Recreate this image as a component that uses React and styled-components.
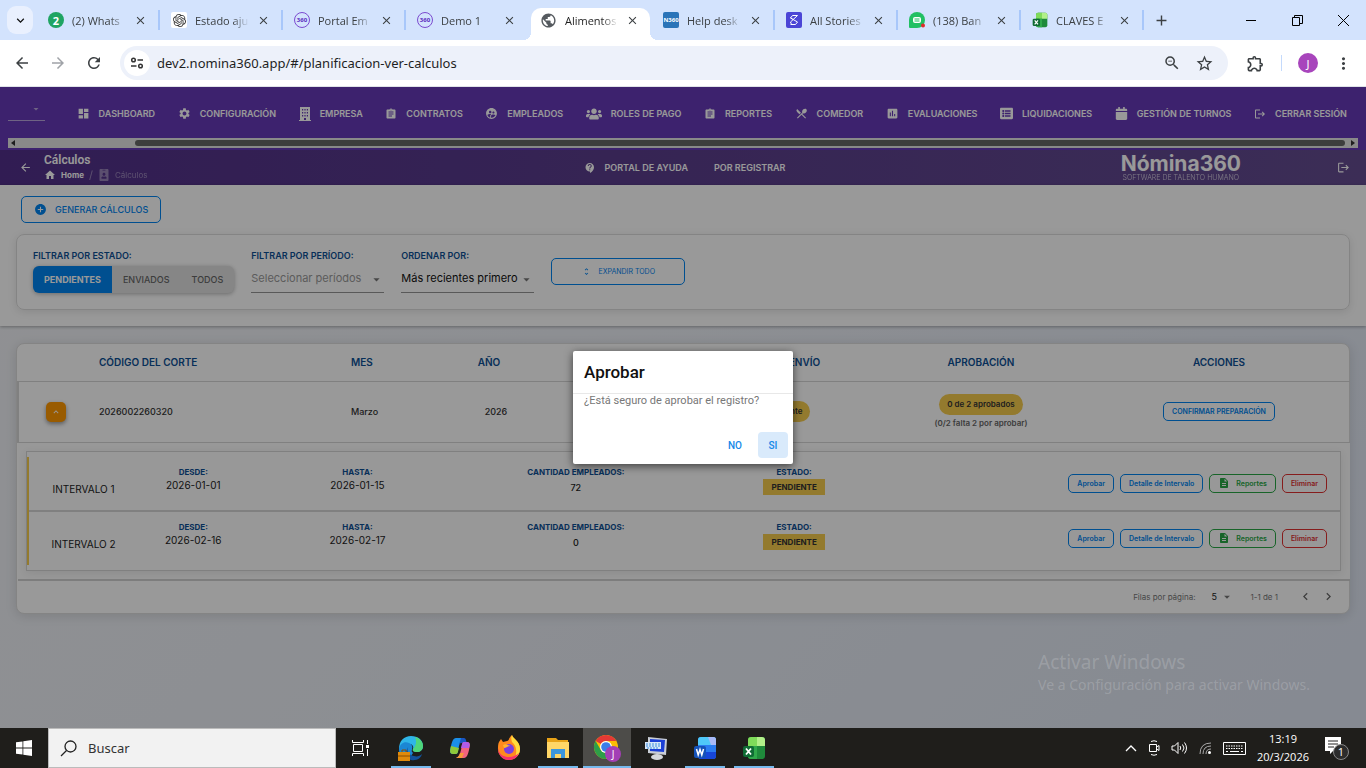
import React from "react";
import styled, { createGlobalStyle } from "styled-components";
import {
  MdAddCircle,
  MdArrowBack,
  MdArrowDropDown,
  MdArrowForward,
  MdAssessment,
  MdAssignment,
  MdChevronLeft,
  MdChevronRight,
  MdClose,
  MdContactSupport,
  MdDashboard,
  MdDescription,
  MdExpandLess,
  MdExpandMore,
  MdHome,
  MdLogout,
  MdMoreVert,
  MdOutlineExtension,
  MdOutlineZoomOut,
  MdAdd,
  MdPublic,
  MdRefresh,
  MdRestaurantMenu,
  MdSettings,
  MdStarOutline,
  MdSupervisedUserCircle,
  MdUnfoldMore,
} from "react-icons/md";
import { FaCalendar, FaIdBadge, FaListAlt, FaUsers } from "react-icons/fa";
import { SiOpenai } from "react-icons/si";

const BuildingIcon = () => (
  <svg width="12" height="14" viewBox="0 0 12 14" fill="#fff">
    <path
      fillRule="evenodd"
      d="M1 0h10v13h1v1H0v-1h1zM3 2v1.500h1.200V2zM5.400 2v1.500h1.200V2zM7.800 2v1.500H9V2zM3 5v1.500h1.200V5zM5.400 5v1.500h1.200V5zM7.800 5v1.500H9V5zM3 8v1.500h1.200V8zM5.400 8v1.500h1.200V8zM7.800 8v1.500H9V8zM5 11v2h2v-2z"
    />
  </svg>
);

const tabs = [
  { title: "(2) Whats", icon: "whatsapp", line: true },
  { title: "Estado aju", icon: "gpt", line: true },
  { title: "Portal Em", icon: "n360", line: true },
  { title: "Demo 1", icon: "n360" },
  { title: "Alimentos", icon: "globe", active: true },
  { title: "Help desk", icon: "help", line: true },
  { title: "All Stories", icon: "stories", line: true },
  { title: "(138) Ban", icon: "chat", line: true },
  { title: "CLAVES E", icon: "excel", line: true },
];

const navItems = [
  { label: "DASHBOARD", icon: <MdDashboard size={13} /> },
  { label: "CONFIGURACIÓN", icon: <MdSettings size={13} /> },
  { label: "EMPRESA", icon: <BuildingIcon /> },
  { label: "CONTRATOS", icon: <MdAssignment size={12} /> },
  { label: "EMPLEADOS", icon: <MdSupervisedUserCircle size={13} /> },
  { label: "ROLES DE PAGO", icon: <FaUsers size={16} /> },
  { label: "REPORTES", icon: <MdAssignment size={12} /> },
  { label: "COMEDOR", icon: <MdRestaurantMenu size={13} /> },
  { label: "EVALUACIONES", icon: <MdAssessment size={13} /> },
  { label: "LIQUIDACIONES", icon: <FaListAlt size={13} /> },
  { label: "GESTIÓN DE TURNOS", icon: <FaCalendar size={13} /> },
  { label: "CERRAR SESIÓN", icon: <MdLogout size={12} /> },
];

const intervals = [
  { name: "INTERVALO 1", from: "2026-01-01", to: "2026-01-15", count: 72 },
  { name: "INTERVALO 2", from: "2026-02-16", to: "2026-02-17", count: 0 },
];

const ExcelIcon = ({ size }) => (
  <svg width={size} height={size} viewBox="0 0 24 24">
    <rect x="6" y="1" width="17" height="22" rx="3" fill="#1f8a3b" />
    <path d="M6 4a3 3 0 0 1 3-3h6v9H6z" fill="#7fdc5a" />
    <path d="M15 1h5a3 3 0 0 1 3 3v6h-8z" fill="#b2f08a" />
    <path d="M6 10h9v13H9a3 3 0 0 1-3-3z" fill="#2fa84a" />
    <rect x="1" y="10" width="11" height="11" rx="2" fill="#0f6b34" />
    <path d="M4 12.5l5 6M9 12.5l-5 6" stroke="#fff" strokeWidth="1.8" />
  </svg>
);

const WordIcon = ({ size }) => (
  <svg width={size} height={size} viewBox="0 0 24 24">
    <rect x="5" y="1" width="18" height="22" rx="3" fill="#2b7cf0" />
    <path d="M5 4a3 3 0 0 1 3-3h12a3 3 0 0 1 3 3v5H5z" fill="#4fc8f8" />
    <path d="M15 1h5a3 3 0 0 1 3 3v5h-5z" fill="#a9b9f7" />
    <path d="M5 16h18v4a3 3 0 0 1-3 3H8a3 3 0 0 1-3-3z" fill="#1746d8" />
    <rect x="1" y="10" width="12" height="12" rx="2" fill="#1552b8" />
    <path
      d="M3.5 13l1.7 6L7 13.500l1.800 5.500 1.700-6"
      stroke="#fff"
      strokeWidth="1.500"
      fill="none"
    />
  </svg>
);

const Favicon = ({ name }) => {
  if (name === "whatsapp") return <Round $bg="#1fa463">2</Round>;
  if (name === "gpt")
    return (
      <Square $bg="#fff">
        <SiOpenai size={13} color="#333" />
      </Square>
    );
  if (name === "n360") return <Ring>360</Ring>;
  if (name === "globe") return <MdPublic size={17} color="#555a5f" />;
  if (name === "help") return <Square $bg="#2a74b8">N360</Square>;
  if (name === "stories")
    return (
      <Square $bg="#4b45d6">
        <svg width="12" height="12" viewBox="0 0 12 12" fill="none" stroke="#fff">
          <path d="M9.500 1.500h-5L2.500 4l7 4-2 2.500h-5M9.500 1.500L2.500 8l1 2.500M2.500 4l2 1" />
        </svg>
      </Square>
    );
  if (name === "chat")
    return (
      <svg width="16" height="16" viewBox="0 0 16 16">
        <path d="M8 0a8 8 0 1 1 0 16H1a1 1 0 0 1-1-1V8a8 8 0 0 1 8-8z" fill="#21c063" />
        <rect x="4" y="5" width="8" height="6" rx="2" fill="#fff" />
        <path d="M5.500 7h5M5.500 9h5" stroke="#21c063" />
        <circle cx="14" cy="13.500" r="2" fill="#e02b2b" />
      </svg>
    );
  return <ExcelIcon size={16} />;
};

const Browser = () => (
  <header>
    <TabStrip>
      <TabSearch aria-label="Buscar pestañas">
        <MdExpandMore size={15} />
      </TabSearch>
      {tabs.map((tab, i) => (
        <Tab key={i} $active={tab.active} $line={tab.line}>
          <Favicon name={tab.icon} />
          <TabTitle $active={tab.active}>{tab.title}</TabTitle>
          <PlainButton aria-label="Cerrar pestaña">
            <MdClose size={13} />
          </PlainButton>
        </Tab>
      ))}
      <NewTab aria-label="Nueva pestaña">
        <MdAdd size={17} />
      </NewTab>
      <WindowButtons>
        <PlainButton aria-label="Minimizar">
          <svg width="11" height="11" stroke="#000">
            <path d="M0 5.500h10" />
          </svg>
        </PlainButton>
        <PlainButton aria-label="Restaurar">
          <svg width="11" height="11" stroke="#000" fill="none">
            <path d="M.5 2.500h7v8h-7zM2.500 2.500v-2h8v8h-3" />
          </svg>
        </PlainButton>
        <PlainButton aria-label="Cerrar">
          <svg width="11" height="11" stroke="#000">
            <path d="M0 0l11 11M11 0L0 11" />
          </svg>
        </PlainButton>
      </WindowButtons>
    </TabStrip>
    <Toolbar>
      <PlainButton aria-label="Atrás">
        <MdArrowBack size={18} />
      </PlainButton>
      <PlainButton aria-label="Adelante" $color="#a0a3a8">
        <MdArrowForward size={18} />
      </PlainButton>
      <PlainButton aria-label="Recargar">
        <MdRefresh size={18} />
      </PlainButton>
      <Omnibox>
        <SiteInfo aria-label="Información del sitio">
          <svg width="14" height="14" viewBox="0 0 14 14" fill="none" stroke="#333" strokeWidth="1.500">
            <circle cx="3.500" cy="4" r="1.800" />
            <circle cx="10.500" cy="10" r="1.800" />
            <path d="M7.500 4H13M1 10h5.500" />
          </svg>
        </SiteInfo>
        <Url
          aria-label="Dirección"
          defaultValue="dev2.nomina360.app/#/planificacion-ver-calculos"
        />
        <PlainButton aria-label="Zoom">
          <MdOutlineZoomOut size={18} />
        </PlainButton>
        <PlainButton aria-label="Favorito">
          <MdStarOutline size={19} />
        </PlainButton>
      </Omnibox>
      <ToolbarEnd>
        <PlainButton aria-label="Extensiones">
          <MdOutlineExtension size={19} />
        </PlainButton>
        <ToolbarLine />
        <Avatar aria-label="Perfil">J</Avatar>
        <PlainButton aria-label="Menú">
          <MdMoreVert size={19} />
        </PlainButton>
      </ToolbarEnd>
    </Toolbar>
  </header>
);

const TopNav = () => (
  <NavBar>
    <NavRow>
      <CompanyPicker>
        <MdArrowDropDown size={12} />
      </CompanyPicker>
      {navItems.map((item) => (
        <NavLink href="#" key={item.label}>
          {item.icon}
          {item.label}
        </NavLink>
      ))}
    </NavRow>
    <ScrollTrack>
      <ScrollArrow viewBox="0 0 4 6">
        <path d="M4 0v6L0 3z" />
      </ScrollArrow>
      <ScrollThumb />
      <ScrollArrow viewBox="0 0 4 6">
        <path d="M0 0v6l4-3z" />
      </ScrollArrow>
    </ScrollTrack>
  </NavBar>
);

const TitleBar = () => (
  <SubBar>
    <SubLeft>
      <PlainButton aria-label="Volver" $color="#fff">
        <MdArrowBack size={13} />
      </PlainButton>
      <div>
        <PageTitle>Cálculos</PageTitle>
        <Crumbs>
          <MdHome size={12} />
          <a href="#">Home</a>
          <Slash>/</Slash>
          <FaIdBadge size={12} opacity={0.4} />
          <CurrentCrumb>Cálculos</CurrentCrumb>
        </Crumbs>
      </div>
    </SubLeft>
    <SubLinks>
      <NavLink href="#">
        <MdContactSupport size={12} />
        PORTAL DE AYUDA
      </NavLink>
      <NavLink href="#">POR REGISTRAR</NavLink>
    </SubLinks>
    <SubRight>
      <Logo>
        <LogoName>Nómina360</LogoName>
        <LogoTag>SOFTWARE DE TALENTO HUMANO</LogoTag>
      </Logo>
      <PlainButton aria-label="Salir" $color="#fff">
        <MdLogout size={13} />
      </PlainButton>
    </SubRight>
  </SubBar>
);

const Filters = () => (
  <FilterSection>
    <GenerateButton>
      <MdAddCircle size={13} />
      GENERAR CÁLCULOS
    </GenerateButton>
    <FilterCard>
      <div>
        <FieldLabel as="p">FILTRAR POR ESTADO:</FieldLabel>
        <ToggleGroup>
          <Toggle $on>PENDIENTES</Toggle>
          <Toggle>ENVIADOS</Toggle>
          <Toggle>TODOS</Toggle>
        </ToggleGroup>
      </div>
      <SelectField>
        <FieldLabel htmlFor="periodo">FILTRAR POR PERÍODO:</FieldLabel>
        <SelectBox>
          <Select id="periodo" $muted>
            <option>Seleccionar períodos</option>
          </Select>
          <MdArrowDropDown size={15} />
        </SelectBox>
      </SelectField>
      <SelectField>
        <FieldLabel htmlFor="orden">ORDENAR POR:</FieldLabel>
        <SelectBox>
          <Select id="orden">
            <option>Más recientes primero</option>
          </Select>
          <MdArrowDropDown size={15} />
        </SelectBox>
      </SelectField>
      <ExpandAll>
        <MdUnfoldMore size={9} />
        EXPANDIR TODO
      </ExpandAll>
    </FilterCard>
  </FilterSection>
);

const IntervalTable = () => (
  <IntervalCard>
    <Table>
      <colgroup>
        <col width="110" />
        <col width="110" />
        <col width="218" />
        <col width="218" />
        <col width="218" />
        <col width="436" />
      </colgroup>
      <tbody>
        {intervals.map((row) => (
          <IntervalRow key={row.name}>
            <NameCell>{row.name}</NameCell>
            <td>
              <SmallLabel>DESDE:</SmallLabel>
              <DateText>{row.from}</DateText>
            </td>
            <td>
              <SmallLabel>HASTA:</SmallLabel>
              <DateText>{row.to}</DateText>
            </td>
            <td>
              <SmallLabel>CANTIDAD EMPLEADOS:</SmallLabel>
              <CountText>{row.count}</CountText>
            </td>
            <td>
              <SmallLabel>ESTADO:</SmallLabel>
              <Badge>PENDIENTE</Badge>
            </td>
            <td>
              <Actions>
                <OutlineButton>Aprobar</OutlineButton>
                <OutlineButton>Detalle de Intervalo</OutlineButton>
                <OutlineButton $color="#28a745">
                  <MdDescription size={12} />
                  Reportes
                </OutlineButton>
                <OutlineButton $color="#e03131">Eliminar</OutlineButton>
              </Actions>
            </td>
          </IntervalRow>
        ))}
      </tbody>
    </Table>
  </IntervalCard>
);

const CutTable = () => (
  <TableCard>
    <Table>
      <colgroup>
        <col width="74" />
        <col width="252" />
        <col width="92" />
        <col width="120" />
        <col width="136" />
        <col width="182" />
        <col width="214" />
        <col width="262" />
      </colgroup>
      <thead>
        <HeadRow>
          <th />
          <HeadCell $left>CÓDIGO DEL CORTE</HeadCell>
          <HeadCell $left>MES</HeadCell>
          <HeadCell $sort>AÑO</HeadCell>
          <th />
          <HeadCell>ESTADO ENVÍO</HeadCell>
          <HeadCell>APROBACIÓN</HeadCell>
          <HeadCell>ACCIONES</HeadCell>
        </HeadRow>
      </thead>
      <tbody>
        <CutRow>
          <Cell>
            <CollapseButton aria-label="Contraer">
              <MdExpandLess size={10} />
            </CollapseButton>
          </Cell>
          <Cell $left>2026002260320</Cell>
          <Cell $left>Marzo</Cell>
          <Cell>2026</Cell>
          <Cell />
          <Cell>
            <Pill>Pendiente</Pill>
          </Cell>
          <Cell>
            <Pill>0 de 2 aprobados</Pill>
            <Hint>(0/2 falta 2 por aprobar)</Hint>
          </Cell>
          <Cell>
            <OutlineButton>CONFIRMAR PREPARACIÓN</OutlineButton>
          </Cell>
        </CutRow>
        <tr>
          <DetailCell colSpan={8}>
            <IntervalTable />
          </DetailCell>
        </tr>
      </tbody>
    </Table>
    <Pagination>
      <label htmlFor="filas">Filas por página:</label>
      <PageSize>
        <PageSelect id="filas">
          <option>5</option>
        </PageSelect>
        <MdArrowDropDown size={14} />
      </PageSize>
      <span>1-1 de 1</span>
      <PagerButtons>
        <PlainButton aria-label="Anterior" $color="#666">
          <MdChevronLeft size={15} />
        </PlainButton>
        <PlainButton aria-label="Siguiente" $color="#666">
          <MdChevronRight size={15} />
        </PlainButton>
      </PagerButtons>
    </Pagination>
  </TableCard>
);

const ConfirmDialog = () => (
  <Backdrop>
    <Dialog role="dialog" aria-labelledby="dialog-title">
      <DialogTitle id="dialog-title">Aprobar</DialogTitle>
      <DialogText>¿Está seguro de aprobar el registro?</DialogText>
      <DialogActions>
        <DialogButton>NO</DialogButton>
        <DialogButton $focus>SI</DialogButton>
      </DialogActions>
    </Dialog>
  </Backdrop>
);

const EdgeIcon = () => (
  <svg width="26" height="26" viewBox="0 0 26 26">
    <path d="M1 14C1 6 6 1 13 1c7 0 12 4 12 10 0 4-3 6-6 6s-5-1-4-3c1-3-1-5-4-5-5 0-8 4-8 9z" fill="#2fb5e8" />
    <path d="M17 2c5 1 8 5 8 9 0 4-3 6-6 6s-5-1-4-3c3-3 4-8 2-12z" fill="#4fd67a" />
    <path d="M1 14c1-6 6-8 10-6 3 1 4 4 3 6 0 2-1 2 1 4l-4 6H5C2 22 1 18 1 14z" fill="#1b87d4" />
    <path d="M11 11c-3 3-1 9 5 10 3 1 6 0 8-2-1 4-5 7-11 6-6-2-6-10-2-14z" fill="#12519c" />
    <rect y="17" width="12" height="9" fill="#e08a0b" />
    <path d="M0 21h12M4 17v-2h4v2" stroke="#8a4d00" fill="none" />
  </svg>
);

const CopilotIcon = () => (
  <svg width="24" height="24" viewBox="0 0 24 24">
    <path d="M16 2H8C5 2 4 6 3 10s-2 8 2 8h3c2 0 2-4 3-8s2-7 5-8z" fill="#1b8fe8" />
    <path d="M3 10c-1 4-2 8 2 8h3c2 0 2-3 3-6z" fill="#8fc93a" />
    <path d="M13 2h3c2 0 2 3 3 5h-4c-2 0-3 0-4 2z" fill="#1856c4" />
    <path d="M8 22h8c3 0 4-4 5-8s2-8-2-8h-3c-2 0-2 4-3 8s-2 7-5 8z" fill="#f2637e" />
    <path d="M21 12c1-3 1-6-2-6h-3c-2 0-2 3-3 6z" fill="#b05be8" />
    <path d="M8 22h6l2-5h-4c-1 3-2 4-4 5z" fill="#f79a3a" />
  </svg>
);

const FirefoxIcon = () => (
  <svg width="26" height="26" viewBox="0 0 26 26">
    <path d="M3 7l2-3 2 3 4-1c2 0 2-4 5-6 1 4 8 6 8 14a11 11 0 0 1-22 0c0-3 0-5 1-7z" fill="#ff8a1e" />
    <path d="M16 0c1 4 8 6 8 14 0 4-2 7-5 9 2-5 2-12-3-16-1-3-1-5 0-7z" fill="#ffdc3e" />
    <path d="M2 13c1 7 6 9 11 9 4 0 8-2 10-4-2 5-6 7-10 7A11 11 0 0 1 2 13z" fill="#f5316e" />
    <circle cx="13" cy="14" r="5" fill="#7a3fe0" />
    <path d="M7 10c3-2 5 0 7 1-2 0-4 2-6 2z" fill="#ffb52e" />
  </svg>
);

const FolderIcon = () => (
  <svg width="24" height="24" viewBox="0 0 24 24">
    <path d="M1 2h9l2 2h10v18H1z" fill="#e8a317" />
    <path d="M1 6h22v16H1z" fill="#ffd667" />
    <path d="M5 22v-9h14v9h-4v-4H9v4z" fill="#3c96dc" />
  </svg>
);

const ChromeIcon = () => (
  <svg width="28" height="28" viewBox="0 0 28 28">
    <circle cx="13" cy="13" r="12" fill="#fbbc05" />
    <path d="M2.600 7A12 12 0 0 1 23.400 7H13a6 6 0 0 0-5 3z" fill="#e53935" />
    <path d="M2.600 7a12 12 0 0 0 10.400 18l5-9a6 6 0 0 1-10.200 0z" fill="#2e9e48" />
    <circle cx="13" cy="13" r="6" fill="#fff" />
    <circle cx="13" cy="13" r="4.800" fill="#3b7de8" />
    <circle cx="20" cy="20" r="8" fill="#a33fb5" />
    <text x="20" y="24" fontSize="10" fill="#fff" textAnchor="middle" fontFamily="Open Sans">
      J
    </text>
  </svg>
);

const PcIcon = () => (
  <svg width="24" height="24" viewBox="0 0 24 24">
    <path d="M4 1l19 2-1 16-18-2z" fill="#c9ced6" />
    <path d="M6 3l15 1-1 12-14-1z" fill="#1b3fd6" />
    <rect x="1" y="6" width="16" height="7" fill="#d7e6f7" />
    <path d="M2 8h14M2 10h14M3 12h12" stroke="#3d8fe0" strokeDasharray="2 1" />
    <ellipse cx="13" cy="21" rx="6" ry="3" fill="#d5d8dc" />
  </svg>
);

const Taskbar = () => (
  <TaskbarRow>
    <StartButton aria-label="Inicio">
      <svg width="16" height="16" viewBox="0 0 16 16" fill="#fff">
        <path d="M0 2.300l6.500-.9v6.200H0zM7.300 1.300L16 0v7.600H7.300zM0 8.400h6.500v6.200L0 13.700zM7.300 8.400H16V16l-8.700-1.300z" />
      </svg>
    </StartButton>
    <SearchBox>
      <svg width="17" height="17" viewBox="0 0 17 17" fill="none" stroke="#222" strokeWidth="1.300">
        <circle cx="10.500" cy="6.500" r="5.500" />
        <path d="M6.500 10.500L1 16" />
      </svg>
      <SearchInput placeholder="Buscar" aria-label="Buscar" />
    </SearchBox>
    <TaskButton aria-label="Vista de tareas">
      <svg width="17" height="16" viewBox="0 0 17 16" fill="none" stroke="#fff">
        <path d="M.5 0v2.500h11V0M.5 16v-2.500h11V16M1.500 4.500h9v7h-9zM15.500 0v4M15.500 9v7" />
        <rect x="14.500" y="5.500" width="2" height="2" fill="#fff" />
      </svg>
    </TaskButton>
    <Apps>
      <TaskButton aria-label="Edge" $open>
        <EdgeIcon />
      </TaskButton>
      <TaskButton aria-label="Copilot">
        <CopilotIcon />
      </TaskButton>
      <TaskButton aria-label="Firefox">
        <FirefoxIcon />
      </TaskButton>
      <TaskButton aria-label="Explorador" $open>
        <FolderIcon />
      </TaskButton>
      <TaskButton aria-label="Chrome" $open $active>
        <ChromeIcon />
      </TaskButton>
      <TaskButton aria-label="Equipo">
        <PcIcon />
      </TaskButton>
      <TaskButton aria-label="Word" $open>
        <WordIcon size={24} />
      </TaskButton>
      <TaskButton aria-label="Excel" $open>
        <ExcelIcon size={24} />
      </TaskButton>
    </Apps>
    <Tray>
      <svg width="12" height="12" fill="none" stroke="#fff" strokeWidth="1.300">
        <path d="M1 9l5-5 5 5" />
      </svg>
      <svg width="12" height="16" fill="none" stroke="#fff">
        <path d="M3 1.500q3-1.500 6 0M3 14.500q3 1.500 6 0M1.500 4.500h7v7h-7zM8.500 7l2.500-1.500v5L8.500 9" />
      </svg>
      <svg width="17" height="14" fill="none" stroke="#fff">
        <path d="M1 5h2.500L7 1.500v11L3.500 9H1zM9 5q1.500 2 0 4M11.500 3.500q3 3.500 0 7M13.500 1.500q4 5.500 0 11" />
      </svg>
      <svg width="13" height="13" fill="none" stroke="#aaa">
        <path d="M1 12Q1 1 12 1M4 12Q4 4 12 4M7 12q0-5 5-5" />
        <circle cx="10.500" cy="10.500" r="1.500" fill="#fff" stroke="none" />
      </svg>
      <svg width="23" height="13" fill="none" stroke="#fff">
        <path d="M.5.500h22v12H.5z" />
        <path d="M3 4h17M3 6.500h17" strokeDasharray="1.500 1" />
        <path d="M3 9.500h2M7 9.500h9M18 9.500h2" />
      </svg>
      <Clock>
        <span>13:19</span>
        <span>20/3/2026</span>
      </Clock>
      <Notifications aria-label="Notificaciones">
        <svg width="26" height="26" viewBox="0 0 26 26">
          <path d="M1 2h16v14H9l-3 3v-3H1z" fill="#fff" />
          <path d="M4 6h10M4 9h10M4 12h6" stroke="#222" />
          <circle cx="17" cy="17" r="7.500" fill="#2c2c2c" stroke="#888" />
          <text x="17" y="21" fontSize="11" fill="#fff" textAnchor="middle" fontFamily="Open Sans">
            1
          </text>
        </svg>
      </Notifications>
    </Tray>
  </TaskbarRow>
);

const App = () => {
  return (
    <Screen>
      <GlobalStyle />
      <Browser />
      <Page>
        <TopNav />
        <TitleBar />
        <Filters />
        <CutTable />
        <ConfirmDialog />
        <Watermark>
          <strong>Activar Windows</strong>
          <span>Ve a Configuración para activar Windows.</span>
        </Watermark>
      </Page>
      <Taskbar />
    </Screen>
  );
};

const GlobalStyle = createGlobalStyle`
  * {
    box-sizing: border-box;
  }
  body {
    margin: 0;
    font-family: Inter, Roboto, sans-serif;
  }
  button, input, select {
    font-family: inherit;
  }
  p, h1, h2 {
    margin: 0;
  }
  svg {
    flex-shrink: 0;
  }
`;

const Screen = styled.div`
  display: flex;
  flex-direction: column;
  min-height: 100vh;
`;

const PlainButton = styled.button`
  display: flex;
  align-items: center;
  justify-content: center;
  padding: 0;
  border: none;
  background: none;
  color: ${(props) => props.$color || "#3c4043"};
`;

/* browser window */

const TabStrip = styled.div`
  display: flex;
  align-items: center;
  height: 40px;
  padding-left: 7px;
  background: #d3e3fd;
  font-family: "Open Sans", sans-serif;
`;

const TabSearch = styled(PlainButton)`
  width: 26px;
  height: 28px;
  margin-right: 4px;
  border-radius: 9px;
  background: #e9f0fe;
  color: #111;
`;

const Tab = styled.div`
  position: relative;
  display: flex;
  align-items: center;
  gap: 8px;
  flex: 0 1 123px;
  min-width: 0;
  height: 40px;
  padding: 0 13px 0 11px;
  &::after {
    content: "";
    position: absolute;
    right: 0;
    width: 2px;
    height: 20px;
    background: ${(props) => (props.$line ? "#a8c7fa" : "none")};
  }
  ${(props) =>
    props.$active &&
    `
    height: 32px;
    align-self: flex-end;
    margin: 0 2px;
    flex-basis: 119px;
    padding: 0 11px 8px 9px;
    border-radius: 10px 10px 0 0;
    background: #fff;
    &::before, &::after {
      content: "";
      position: absolute;
      bottom: 0;
      width: 8px;
      height: 8px;
    }
    &::before {
      left: -8px;
      background: radial-gradient(circle at 0 0, transparent 8px, #fff 8px);
    }
    &::after {
      right: -8px;
      background: radial-gradient(circle at 100% 0, transparent 8px, #fff 8px);
    }
  `}
`;

const TabTitle = styled.span`
  flex: 1;
  white-space: nowrap;
  font-size: 11px;
  color: ${(props) => (props.$active ? "#1f1f1f" : "#3c4043")};
  mask-image: linear-gradient(to right, #000 70%, transparent);
`;

const Square = styled.span`
  display: flex;
  align-items: center;
  justify-content: center;
  flex-shrink: 0;
  width: 16px;
  height: 16px;
  border-radius: 2px;
  background: ${(props) => props.$bg};
  color: #fff;
  font-size: 6px;
  font-weight: bold;
`;

const Round = styled(Square)`
  border-radius: 50%;
  font-size: 11px;
`;

const Ring = styled(Square)`
  border: 1px solid #7b4bd0;
  border-radius: 50%;
  color: #5b2bc0;
`;

const NewTab = styled(PlainButton)`
  width: 34px;
`;

const WindowButtons = styled.div`
  display: flex;
  align-self: stretch;
  margin-left: auto;
  button {
    width: 46px;
  }
`;

const Toolbar = styled.div`
  display: flex;
  align-items: center;
  gap: 18px;
  height: 47px;
  padding: 0 13px;
  background: #fff;
  border-bottom: 1px solid #dfe3e8;
  font-family: "Noto Sans", sans-serif;
`;

const Omnibox = styled.div`
  display: flex;
  align-items: center;
  gap: 14px;
  flex: 1;
  height: 34px;
  margin-left: -1px;
  padding: 0 14px 0 4px;
  border-radius: 17px;
  background: #edf1fa;
`;

const SiteInfo = styled(PlainButton)`
  width: 26px;
  height: 26px;
  border-radius: 50%;
  background: #fff;
`;

const Url = styled.input`
  flex: 1;
  min-width: 0;
  margin-left: -7px;
  padding: 0;
  border: none;
  background: none;
  font-size: 13px;
  color: #1f1f1f;
`;

const ToolbarEnd = styled.div`
  display: flex;
  align-items: center;
  gap: 16px;
`;

const ToolbarLine = styled.span`
  width: 1px;
  height: 16px;
  background: #c4dafc;
`;

const Avatar = styled(PlainButton)`
  width: 20px;
  height: 20px;
  border-radius: 50%;
  background: #a845bc;
  color: #fff;
  font-size: 11px;
`;

/* page */

const Page = styled.main`
  position: relative;
  flex: 1;
  background: linear-gradient(135deg, #f1f2f5 0%, #eceff5 40%, #dfe6f3 100%);
`;

const NavBar = styled.nav`
  height: 63px;
  padding: 0 8px;
  background: #673ab7;
`;

const NavRow = styled.div`
  display: flex;
  align-items: center;
  justify-content: space-between;
  height: 51px;
  padding: 2px 11px 0 0;
  overflow: hidden;
`;

const CompanyPicker = styled.div`
  display: flex;
  justify-content: flex-end;
  flex-shrink: 0;
  width: 37px;
  height: 24px;
  margin-right: 9px;
  margin-bottom: 10px;
  padding: 6px 3px 0 0;
  border-bottom: 1px solid #b9a5dc;
  color: #b9a5dc;
`;

const NavLink = styled.a`
  display: flex;
  align-items: center;
  gap: 9px;
  white-space: nowrap;
  color: #fff;
  font-size: 9px;
  font-weight: 600;
  text-decoration: none;
`;

const ScrollTrack = styled.div`
  display: flex;
  align-items: center;
  justify-content: space-between;
  height: 10px;
  padding: 0 3px;
  background: #e4e4e4;
`;

const ScrollThumb = styled.div`
  width: 90%;
  height: 6px;
  margin-left: auto;
  margin-right: 6px;
  border-radius: 3px;
  background: #666;
`;

const ScrollArrow = styled.svg`
  width: 4px;
  height: 6px;
  fill: #333;
`;

const SubBar = styled.div`
  display: grid;
  grid-template-columns: 1fr auto 1fr;
  align-items: center;
  height: 35px;
  padding: 0 16px 0 19px;
  background: linear-gradient(90deg, #52308a, #644c90);
  color: #fff;
`;

const SubLeft = styled.div`
  display: flex;
  align-items: center;
  gap: 12px;
`;

const PageTitle = styled.h1`
  font-size: 12px;
  line-height: 15px;
  font-weight: 600;
  font-family: Roboto, sans-serif;
`;

const Crumbs = styled.div`
  display: flex;
  align-items: center;
  gap: 5px;
  height: 14px;
  font-size: 8px;
  a {
    color: #fff;
    font-weight: 700;
    text-decoration: none;
  }
`;

const Slash = styled.span`
  font-size: 11px;
  opacity: 0.4;
`;

const CurrentCrumb = styled.span`
  opacity: 0.4;
`;

const SubLinks = styled.div`
  display: flex;
  gap: 26px;
`;

const SubRight = styled.div`
  display: flex;
  align-items: center;
  justify-content: flex-end;
  gap: 96px;
`;

const Logo = styled.div`
  text-align: center;
`;

const LogoName = styled.div`
  font-size: 21px;
  line-height: 20px;
  font-weight: 700;
`;

const LogoTag = styled.div`
  font-size: 7px;
  line-height: 7px;
  font-weight: 300;
  opacity: 0.7;
`;

const FilterSection = styled.section`
  padding: 11px 16px 16px;
  background: #fff;
  box-shadow: 0 1px 3px rgba(0, 0, 0, 0.3);
`;

const GenerateButton = styled.button`
  display: flex;
  align-items: center;
  gap: 8px;
  height: 27px;
  margin: 0 0 11px 5px;
  padding: 0 12px;
  border: 1px solid #0084f0;
  border-radius: 5px;
  background: none;
  color: #0084f0;
  font-size: 9px;
  font-weight: 500;
`;

const FilterCard = styled.div`
  display: flex;
  gap: 17px;
  height: 76px;
  padding: 15px 16px;
  border: 1px solid #ddd;
  border-radius: 8px;
  box-shadow: 0 2px 8px rgba(0, 0, 0, 0.1);
`;

const FieldLabel = styled.label`
  display: block;
  margin-bottom: 4px;
  color: #0d4f94;
  font-size: 9px;
  line-height: 12px;
  font-weight: 600;
`;

const ToggleGroup = styled.div`
  display: flex;
  overflow: hidden;
  border-radius: 6px;
  background: #e0e0e0;
  box-shadow: 0 1px 4px rgba(0, 0, 0, 0.3);
`;

const Toggle = styled.button`
  height: 27px;
  padding: 0 11px;
  border: none;
  background: ${(props) => (props.$on ? "#0084f0" : "none")};
  color: ${(props) => (props.$on ? "#fff" : "#666")};
  font-size: 9px;
  font-weight: ${(props) => (props.$on ? 700 : 500)};
`;

const SelectField = styled.div`
  width: 133px;
`;

const SelectBox = styled.div`
  position: relative;
  border-bottom: 1px solid #949494;
  svg {
    position: absolute;
    right: 0;
    top: 6px;
    color: #777;
    pointer-events: none;
  }
`;

const Select = styled.select`
  appearance: none;
  width: 100%;
  height: 25px;
  padding: 0 0 2px;
  border: none;
  background: none;
  font-size: 11px;
  color: ${(props) => (props.$muted ? "#999" : "#111")};
`;

const ExpandAll = styled.button`
  display: flex;
  align-items: center;
  justify-content: center;
  gap: 8px;
  width: 134px;
  height: 27px;
  margin-top: 8px;
  border: 1px solid #0084f0;
  border-radius: 5px;
  background: none;
  color: #0084f0;
  font-size: 7px;
`;

/* tables */

const TableCard = styled.section`
  margin: 17px 16px 0;
  border: 1px solid #dcdcdc;
  border-radius: 8px;
  background: #fff;
  box-shadow: 0 2px 12px rgba(0, 0, 0, 0.12);
`;

const Table = styled.table`
  width: 100%;
  table-layout: fixed;
  border-collapse: collapse;
  td,
  th {
    padding: 0;
  }
`;

const HeadRow = styled.tr`
  height: 37px;
  border-bottom: 1px solid #d5d5d5;
`;

const HeadCell = styled.th`
  && {
    padding-left: ${(props) => (props.$left ? "7px" : "0")};
    padding-right: ${(props) => (props.$sort ? "14px" : "0")};
  }
  text-align: ${(props) => (props.$left ? "left" : "center")};
  color: #0d4f94;
  font-size: 10px;
  font-weight: 600;
`;

const CutRow = styled.tr`
  height: 61px;
  border-left: 2px solid #d5d5d5;
  border-bottom: 1px solid #d5d5d5;
`;

const Cell = styled.td`
  && {
    padding-left: ${(props) => (props.$left ? "7px" : "0")};
  }
  text-align: ${(props) => (props.$left ? "left" : "center")};
  font-size: 9px;
  font-weight: 500;
  color: #333;
`;

const CollapseButton = styled(PlainButton)`
  width: 20px;
  height: 20px;
  margin: 0 auto;
  border-radius: 5px;
  background: #ff9800;
  color: #fff;
  box-shadow: 0 2px 4px rgba(0, 0, 0, 0.4);
`;

const Pill = styled.span`
  display: inline-block;
  padding: 0 8px;
  border-radius: 11px;
  background: #f5cb4e;
  font-size: 8px;
  line-height: 21px;
  font-weight: 600;
`;

const Hint = styled.div`
  margin-top: 2px;
  font-size: 8px;
  line-height: 12px;
  font-weight: 600;
  color: #666;
`;

const DetailCell = styled.td`
  && {
    padding: 8px 9px 8px 8px;
  }
  border-bottom: 2px solid #d0d0d0;
  background: #fdfdfd;
`;

const IntervalCard = styled.div`
  padding: 5px 0;
  border: 1px solid #d5d5d5;
  box-shadow: 0 2px 8px rgba(0, 0, 0, 0.08);
`;

const IntervalRow = styled.tr`
  height: 54px;
  border-left: 2px solid #f5cb4e;
  text-align: center;
  td {
    vertical-align: top;
    padding-top: 9px;
  }
  & + & {
    border-top: 2px solid #d5d5d5;
  }
`;

const NameCell = styled.td`
  && {
    padding-top: 25px;
  }
  font-size: 10px;
  line-height: 14px;
  color: #222;
`;

const SmallLabel = styled.div`
  color: #0d4f94;
  font-size: 8px;
  line-height: 13px;
  font-weight: 700;
`;

const DateText = styled.div`
  font-size: 10px;
  line-height: 13px;
  color: #222;
`;

const CountText = styled.div`
  font-size: 9px;
  line-height: 18px;
  font-weight: 500;
  color: #222;
`;

const Badge = styled.span`
  display: inline-block;
  padding: 0 8px;
  background: #f5cb4e;
  color: #333;
  font-size: 8px;
  line-height: 16px;
  font-weight: 700;
  vertical-align: top;
`;

const Actions = styled.div`
  display: flex;
  justify-content: flex-end;
  gap: 6px;
  padding: 8px 13px 0 0;
`;

const OutlineButton = styled.button`
  display: inline-flex;
  align-items: center;
  gap: 6px;
  height: 19px;
  padding: 0 8px;
  border: 1px solid ${(props) => props.$color || "#0084f0"};
  border-radius: 5px;
  background: none;
  color: ${(props) => props.$color || "#0084f0"};
  font-size: 7px;
  font-weight: 600;
`;

const Pagination = styled.div`
  display: flex;
  align-items: center;
  justify-content: flex-end;
  gap: 16px;
  height: 32px;
  padding-right: 13px;
  font-size: 8px;
  color: #777;
`;

const PageSize = styled.div`
  display: flex;
  align-items: center;
`;

const PageSelect = styled.select`
  appearance: none;
  padding: 0 3px 0 0;
  border: none;
  background: none;
  font-size: 9px;
  color: #222;
`;

const PagerButtons = styled.div`
  display: flex;
  gap: 8px;
  margin-left: 4px;
`;

/* dialog */

const Backdrop = styled.div`
  position: absolute;
  inset: 0;
  display: flex;
  align-items: center;
  justify-content: center;
  background: rgba(0, 0, 0, 0.4);
`;

const Dialog = styled.div`
  width: 220px;
  border-radius: 2px;
  background: #fff;
  box-shadow: 0 2px 8px rgba(0, 0, 0, 0.6);
  font-family: Roboto, sans-serif;
`;

const DialogTitle = styled.h2`
  padding: 0 11px;
  border-bottom: 1px solid #e8e8e8;
  color: #111;
  font-size: 17px;
  line-height: 42px;
  font-weight: 500;
`;

const DialogText = styled.p`
  padding: 0 11px;
  color: #777;
  font-size: 11px;
  line-height: 14px;
`;

const DialogActions = styled.div`
  display: flex;
  justify-content: flex-end;
  gap: 8px;
  padding: 24px 5px 6px;
`;

const DialogButton = styled.button`
  width: 30px;
  height: 26px;
  padding: 0;
  border: none;
  border-radius: 4px;
  background: ${(props) => (props.$focus ? "#d9eafb" : "none")};
  color: #1488e8;
  font-size: 10px;
  font-weight: 500;
`;

const Watermark = styled.div`
  position: absolute;
  right: 56px;
  bottom: 33px;
  display: flex;
  flex-direction: column;
  color: rgba(255, 255, 255, 0.18);
  font-family: "Noto Sans", sans-serif;
  font-size: 14px;
  line-height: 20px;
  strong {
    font-size: 19px;
    line-height: 26px;
    font-weight: 400;
  }
`;

/* taskbar */

const TaskbarRow = styled.footer`
  display: flex;
  height: 40px;
  background: #1f1e1b;
  font-family: "Open Sans", sans-serif;
`;

const TaskButton = styled.button`
  position: relative;
  display: flex;
  align-items: center;
  justify-content: center;
  width: 48px;
  padding: 0;
  border: none;
  background: ${(props) => (props.$active ? "#4d4c49" : "none")};
  &::after {
    content: "";
    position: absolute;
    bottom: 0;
    left: ${(props) => (props.$active ? "0" : "4px")};
    right: ${(props) => (props.$active ? "0" : "4px")};
    height: 2px;
    background: ${(props) => (props.$open ? "#76b9ed" : "none")};
  }
`;

const StartButton = styled(TaskButton)`
  flex-shrink: 0;
`;

const Apps = styled.div`
  display: flex;
  gap: 1px;
  margin-left: 3px;
`;

const SearchBox = styled.div`
  display: flex;
  align-items: center;
  gap: 11px;
  width: 288px;
  padding: 0 11px;
  border: 1px solid #bbb;
  background: #f2f2f2;
`;

const SearchInput = styled.input`
  flex: 1;
  min-width: 0;
  padding: 0;
  border: none;
  background: none;
  font-family: "Noto Sans", sans-serif;
  font-size: 13px;
  &::placeholder {
    color: #333;
  }
`;

const Tray = styled.div`
  display: flex;
  align-items: center;
  gap: 11px;
  margin-left: auto;
  padding-right: 16px;
`;

const Clock = styled.div`
  display: flex;
  flex-direction: column;
  align-items: center;
  color: #fff;
  font-size: 11px;
  line-height: 18px;
`;

const Notifications = styled(PlainButton)`
  margin-left: 4px;
`;

export default App;
